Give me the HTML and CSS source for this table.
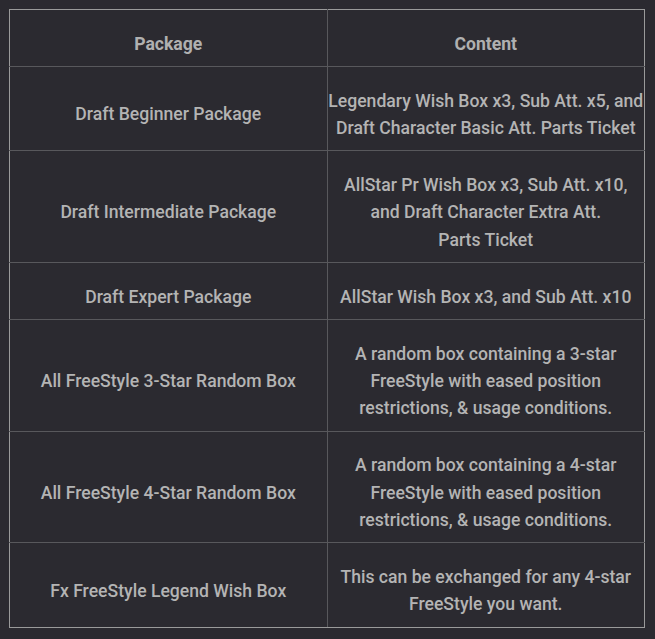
FILE: index.html
```html
<!DOCTYPE html>
<html>
<head>
<meta charset="utf-8">
<link rel="stylesheet" href="styles.css">
</head>
<body>
<table class="pkg-table">
  <thead>
    <tr><th>Package</th><th>Content</th></tr>
  </thead>
  <tbody>
    <tr><td>Draft Beginner Package</td><td>Legendary Wish Box x3, Sub Att. x5, and Draft Character Basic Att. Parts Ticket</td></tr>
    <tr><td>Draft Intermediate Package</td><td>AllStar Pr Wish Box x3, Sub Att. x10, and Draft Character Extra Att.<br>Parts Ticket</td></tr>
    <tr><td>Draft Expert Package</td><td>AllStar Wish Box x3, and Sub Att. x10</td></tr>
    <tr><td>All FreeStyle 3-Star Random Box</td><td>A random box containing a 3-star FreeStyle with eased position restrictions, &amp; usage conditions.</td></tr>
    <tr><td>All FreeStyle 4-Star Random Box</td><td>A random box containing a 4-star FreeStyle with eased position restrictions, &amp; usage conditions.</td></tr>
    <tr><td>Fx FreeStyle Legend Wish Box</td><td>This can be exchanged for any 4-star FreeStyle you want.</td></tr>
  </tbody>
</table>
</body>
</html>
```
FILE: styles.css
```css
html, body {
  background: #2b2a30;
}
body {
  margin: 9px;
  font-family: Roboto, "Liberation Sans", sans-serif;
  color: #b4b4b4;
}
.pkg-table {
  width: 636px;
  border-collapse: collapse;
  table-layout: fixed;
  border: 1px solid #9a9a9a;
  font-size: 17.6px;
  line-height: 27.375px;
}
.pkg-table th,
.pkg-table td {
  border: 1px solid #58585c;
  padding: 20.6px 0 8px;
  text-align: center;
  vertical-align: middle;
  width: 50%;
}
.pkg-table td {
  font-weight: 500;
}
.pkg-table th {
  font-weight: 700;
  color: #b0b0b0;
}
.pkg-table tr:first-child th { border-top-color: #9a9a9a; }
.pkg-table th:first-child, .pkg-table td:first-child { border-left-color: #9a9a9a; }
.pkg-table th:last-child, .pkg-table td:last-child { border-right-color: #9a9a9a; }
.pkg-table tbody tr:last-child td { border-bottom-color: #9a9a9a; }
```
